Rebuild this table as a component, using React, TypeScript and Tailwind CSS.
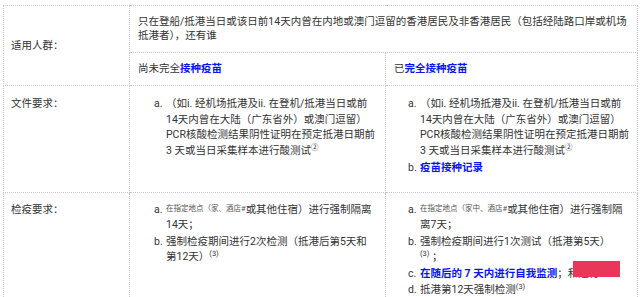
import React from 'react';

const Item = ({ m, children, className = '' }: { m: string; children: React.ReactNode; className?: string }) => (
  <div className={`flex whitespace-nowrap ${className}`}>
    <span className="w-[12px] shrink-0">{m}</span>
    <div>{children}</div>
  </div>
);

const Sup = ({ children }: { children: React.ReactNode }) => (
  <span className="text-[7.5px] align-[4px] leading-none">{children}</span>
);

const Small = ({ children }: { children: React.ReactNode }) => (
  <span className="text-[7.5px] text-[#555] align-[2px] leading-none">{children}</span>
);

const Blue = ({ children }: { children: React.ReactNode }) => (
  <span className="text-[#0a14f5] font-bold">{children}</span>
);

const cell = 'border border-dotted border-[#c5cad3]';

function DocList({ vaccinated }: { vaccinated?: boolean }) {
  return (
    <div className={`leading-[15.5px] ${vaccinated ? 'ml-[14px]' : 'ml-[16px]'}`}>
      <Item m="a." className="mb-[2px]">
        （如i. 经机场抵港及ii. 在登机/抵港当日或前
        <br />
        14天内曾在大陆（广东省外）或澳门逗留）
        <br />
        PCR核酸检测结果阴性证明在预定抵港日期前
        <br />3 天或当日采集样本进行酸测试<Sup>②</Sup>
      </Item>
      {vaccinated && (
        <Item m="b.">
          <Blue>疫苗接种记录</Blue>
        </Item>
      )}
    </div>
  );
}

export default function App() {
  return (
    <div
      className="relative w-[640px] h-[297px] overflow-hidden bg-white text-[#333] text-[10.5px]"
      style={{ fontFamily: 'Roboto, "Noto Sans CJK SC", sans-serif' }}
    >
      <table className="table-fixed border-collapse ml-[3px] mt-[5px] w-[634px]">
        <colgroup>
          <col className="w-[126px]" />
          <col className="w-[256px]" />
          <col className="w-[252px]" />
        </colgroup>
        <tbody>
          {/* 适用人群 */}
          <tr className="h-[47px]">
            <td rowSpan={2} className={`${cell} align-middle pl-[7px]`}>
              适用人群：
            </td>
            <td colSpan={2} className={`${cell} align-middle px-[8px] leading-[14.5px] whitespace-nowrap`}>
              只在登船/抵港当日或该日前14天内曾在内地或澳门逗留的香港居民及非香港居民（包括经陆路口岸或机场
              <br />
              抵港者），还有谁
            </td>
          </tr>
          <tr className="h-[33px]">
            <td className={`${cell} align-middle px-[8px]`}>
              尚未完全<Blue>接种疫苗</Blue>
            </td>
            <td className={`${cell} align-middle px-[8px]`}>
              已<Blue>完全接种疫苗</Blue>
            </td>
          </tr>

          {/* 文件要求 */}
          <tr className="h-[107px]">
            <td className={`${cell} align-top pl-[7px] pt-[10px] leading-[15.5px]`}>文件要求：</td>
            <td className={`${cell} align-top px-[8px] pt-[10px]`}>
              <DocList />
            </td>
            <td className={`${cell} align-top px-[8px] pt-[10px]`}>
              <DocList vaccinated />
            </td>
          </tr>

          {/* 检疫要求 */}
          <tr className="h-[130px]">
            <td className={`${cell} align-top pl-[7px] pt-[9px] leading-[15px]`}>检疫要求：</td>
            <td className={`${cell} align-top px-[8px] pt-[9px]`}>
              <div className="ml-[16px] leading-[15px]">
                <Item m="a." className="mb-[2px]">
                  <Small>在指定地点（家、酒店#</Small>或其他住宿）进行强制隔离
                  <br />
                  14天；
                </Item>
                <Item m="b.">
                  强制检疫期间进行2次检测（抵港后第5天和
                  <br />
                  第12天）<Sup>(3)</Sup>
                </Item>
              </div>
            </td>
            <td className={`${cell} align-top px-[8px] pt-[9px]`}>
              <div className="ml-[14px] leading-[15px]">
                <Item m="a." className="mb-[2px]">
                  <Small>在指定地点（家中、酒店#</Small>或其他住宿）进行强制隔
                  <br />
                  离7天；
                </Item>
                <Item m="b." className="mb-[2px]">
                  强制检疫期间进行1次测试（抵港第5天）
                  <br />
                  <Sup>(3)</Sup> ；
                </Item>
                <Item m="c." className="mb-[1px]">
                  <Blue>在随后的 7 天内进行自我监测</Blue>；和进行
                </Item>
                <Item m="d.">
                  抵港第12天强制检测<Sup>(3)</Sup>
                </Item>
              </div>
            </td>
          </tr>
        </tbody>
      </table>
      {/* redaction overlay */}
      <div className="absolute left-[573px] top-[261px] w-[47px] h-[16px] bg-[#e8375a]" />
    </div>
  );
}
